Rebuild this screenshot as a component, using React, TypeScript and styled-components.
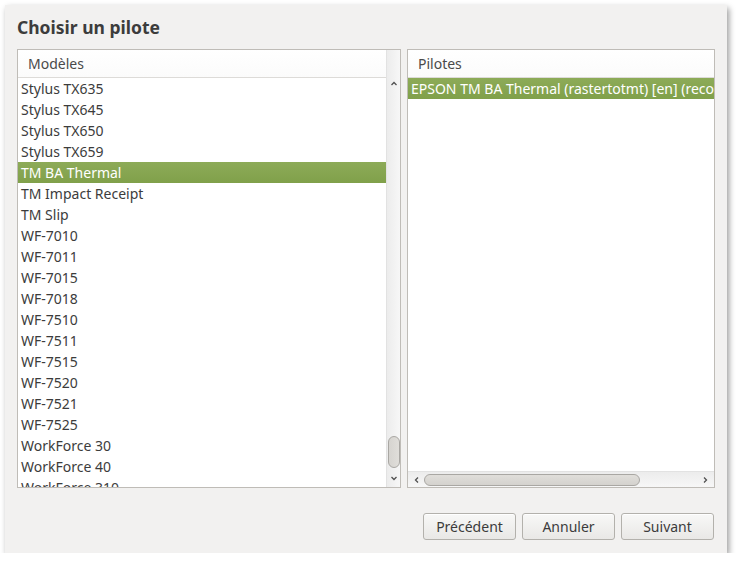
import React from "react";
import styled, { createGlobalStyle } from "styled-components";

const Global = createGlobalStyle`
  html, body { margin: 0; padding: 0; background: #ffffff; }
  body { font-family: "Noto Sans", "DejaVu Sans", sans-serif; }
  * { box-sizing: border-box; }
`;

const Window = styled.div`
  margin: 5px 0 0 5px;
  width: 722px;
  height: 548px;
  background: #f2f1f0;
  box-shadow: 2px 3px 6px rgba(0, 0, 0, 0.4);
  padding: 0 12px 13px 12px;
  display: flex;
  flex-direction: column;
`;

const Title = styled.h1`
  margin: 0;
  height: 44px;
  padding-top: 11px;
  font-size: 17.5px;
  font-weight: 700;
  color: #3c3c3c;
  line-height: 22px;
`;

const Panes = styled.div`
  display: flex;
  gap: 6px;
  height: 439px;
`;

const ListFrame = styled.div<{ $w: number }>`
  width: ${(p) => p.$w}px;
  border: 1px solid #bfbcb7;
  background: #ffffff;
  display: flex;
  overflow: hidden;
`;

const ListCol = styled.div`
  flex: 1;
  min-width: 0;
  display: flex;
  flex-direction: column;
  overflow: hidden;
`;

const Header = styled.div`
  height: 28px;
  flex: none;
  border-bottom: 1px solid #dddbd8;
  background: linear-gradient(#ffffff, #fbfbfb);
  color: #4a4a4a;
  font-size: 14px;
  line-height: 28px;
  padding-left: 10px;
`;

const Rows = styled.div`
  flex: 1;
  overflow: hidden;
`;

const Row = styled.div<{ $sel?: boolean }>`
  height: 21px;
  line-height: 20px;
  padding: 1px 0 0 3px;
  font-size: 14px;
  white-space: nowrap;
  color: ${(p) => (p.$sel ? "#ffffff" : "#3c3c3c")};
  background: ${(p) =>
    p.$sel ? "linear-gradient(#8dab58, #80a04a)" : "transparent"};
`;

const VScroll = styled.div`
  width: 14px;
  flex: none;
  background: linear-gradient(90deg, #ececec, #f7f7f7);
  border-left: 1px solid #e2e2e2;
  display: flex;
  flex-direction: column;
  align-items: center;
  padding-top: 30px;
`;

const Arrow = styled.svg`
  display: block;
  flex: none;
`;

const VThumbArea = styled.div`
  flex: 1;
  width: 100%;
  display: flex;
  flex-direction: column;
  justify-content: flex-end;
  align-items: center;
  padding-bottom: 6px;
`;

const VThumb = styled.div`
  width: 12px;
  height: 32px;
  border: 1px solid #a9a7a3;
  border-radius: 6px;
  background: linear-gradient(90deg, #d6d4d0, #e0deda);
`;

const HScroll = styled.div`
  height: 16px;
  flex: none;
  border-top: 1px solid #e2e2e2;
  background: linear-gradient(#ececec, #f7f7f7);
  display: flex;
  align-items: center;
  padding: 0 5px 0 5px;
  gap: 3px;
`;

const HThumb = styled.div`
  width: 216px;
  height: 12px;
  border: 1px solid #a9a7a3;
  border-radius: 6px;
  background: linear-gradient(#e0deda, #d4d2ce);
`;

const Spacer = styled.div`
  flex: 1;
`;

const Footer = styled.div`
  flex: 1;
  display: flex;
  justify-content: flex-end;
  align-items: flex-end;
  gap: 6px;
  padding-right: 1px;
`;

const Button = styled.button`
  width: 93px;
  height: 27px;
  border: 1px solid #b3b1ac;
  border-radius: 3px;
  background: linear-gradient(#f8f8f7, #e9e8e6);
  color: #3c3c3c;
  font-family: "Noto Sans", "DejaVu Sans", sans-serif;
  font-size: 14px;
  padding: 0;
  box-shadow: inset 0 1px 0 #ffffff;
`;

const models = [
  "Stylus TX635",
  "Stylus TX645",
  "Stylus TX650",
  "Stylus TX659",
  "TM BA Thermal",
  "TM Impact Receipt",
  "TM Slip",
  "WF-7010",
  "WF-7011",
  "WF-7015",
  "WF-7018",
  "WF-7510",
  "WF-7511",
  "WF-7515",
  "WF-7520",
  "WF-7521",
  "WF-7525",
  "WorkForce 30",
  "WorkForce 40",
  "WorkForce 310",
];

const Chevron = ({ dir }: { dir: "up" | "down" | "left" | "right" }) => {
  const d = {
    up: "M1.5 5 L4 2.5 L6.5 5",
    down: "M1.5 3 L4 5.5 L6.5 3",
    left: "M5 1.5 L2.5 4 L5 6.5",
    right: "M3 1.5 L5.5 4 L3 6.5",
  }[dir];
  return (
    <Arrow width="8" height="8" viewBox="0 0 8 8">
      <path d={d} fill="none" stroke="#505050" strokeWidth="1.3" />
    </Arrow>
  );
};

export default function App() {
  return (
    <>
      <Global />
      <Window>
        <Title>Choisir un pilote</Title>
        <Panes>
          <ListFrame $w={384}>
            <ListCol>
              <Header>Modèles</Header>
              <Rows>
                {models.map((m) => (
                  <Row key={m} $sel={m === "TM BA Thermal"}>
                    {m}
                  </Row>
                ))}
              </Rows>
            </ListCol>
            <VScroll>
              <Chevron dir="up" />
              <VThumbArea>
                <VThumb />
              </VThumbArea>
              <Chevron dir="down" />
              <div style={{ height: 5 }} />
            </VScroll>
          </ListFrame>
          <ListFrame $w={308}>
            <ListCol>
              <Header>Pilotes</Header>
              <Rows>
                <Row $sel>EPSON TM BA Thermal (rastertotmt) [en] (recommended)</Row>
              </Rows>
              <HScroll>
                <Chevron dir="left" />
                <HThumb />
                <Spacer />
                <Chevron dir="right" />
              </HScroll>
            </ListCol>
          </ListFrame>
        </Panes>
        <Footer>
          <Button>Précédent</Button>
          <Button>Annuler</Button>
          <Button>Suivant</Button>
        </Footer>
      </Window>
    </>
  );
}
